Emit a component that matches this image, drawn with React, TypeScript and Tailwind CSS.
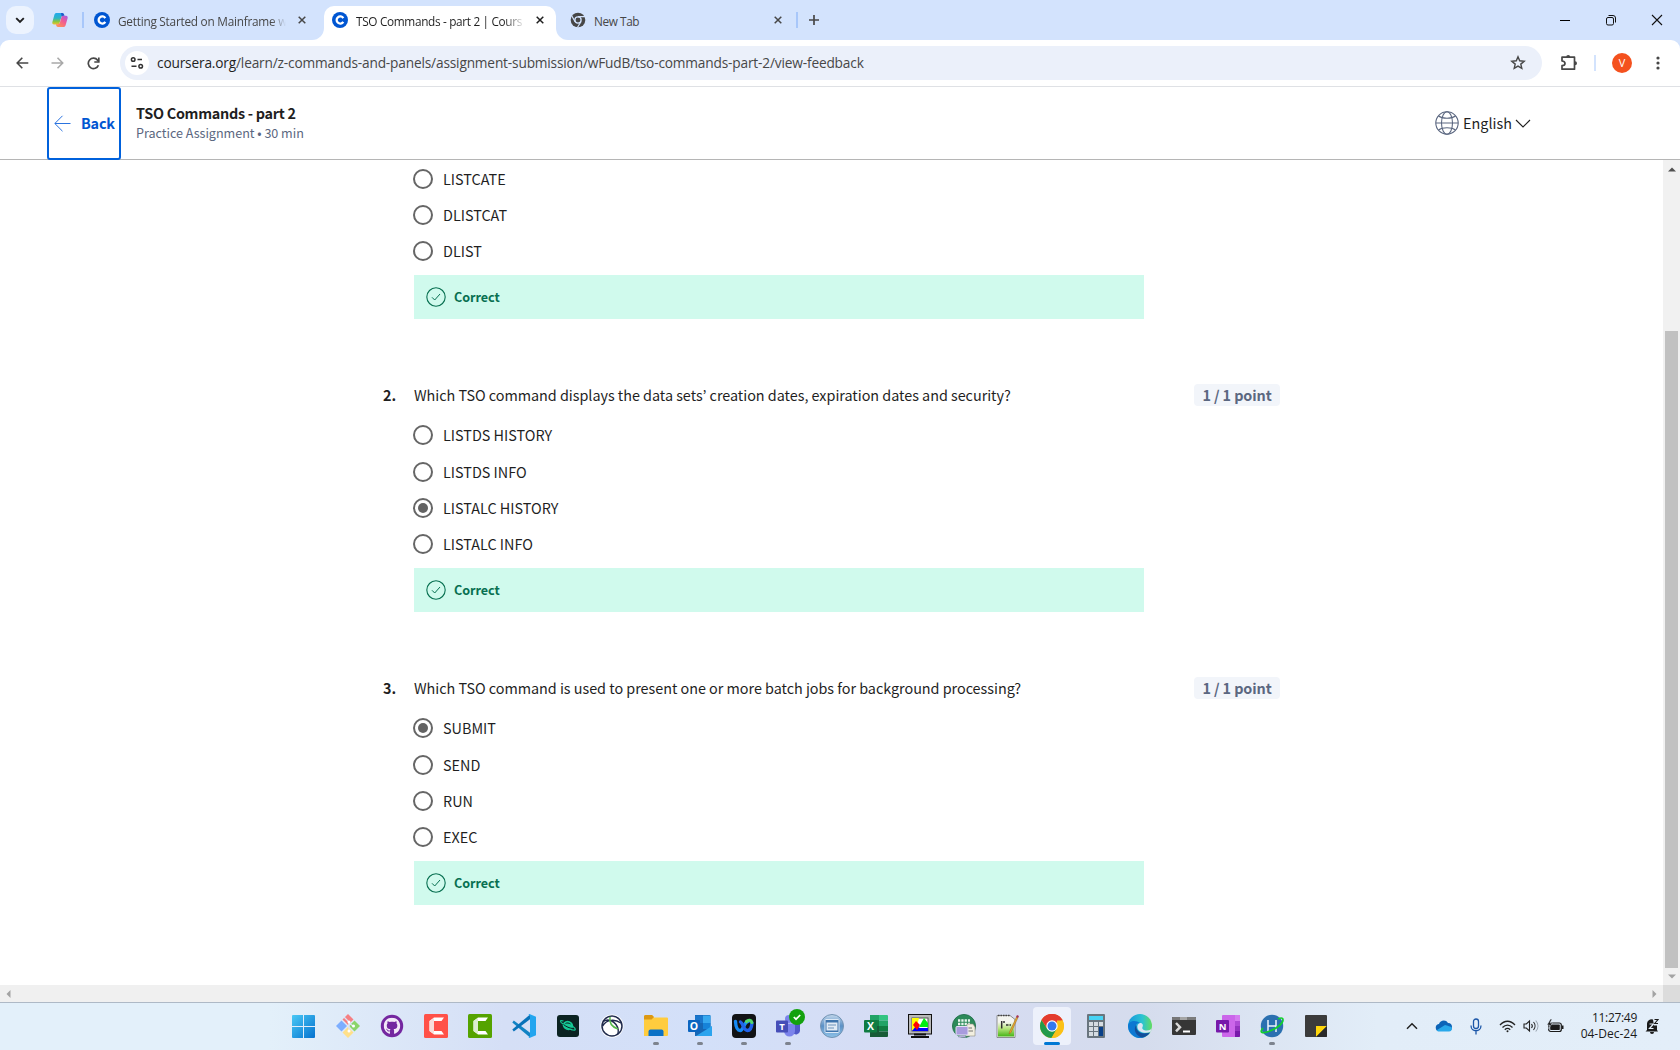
import React from 'react';
import { FaGithub } from 'react-icons/fa';

const SRC = "font-['Noto_Sans_CJK_KR',sans-serif]";
const UI = "font-['Open_Sans',sans-serif]";

function Coursera() {
  return (
    <svg width="16" height="16" viewBox="0 0 16 16" className="shrink-0">
      <circle cx="8" cy="8" r="8" fill="#0056d2" />
      <path d="M11.3 6.1A3.6 3.6 0 1 0 11.3 9.9" fill="none" stroke="#fff" strokeWidth="2.3" />
    </svg>
  );
}

function Close({ color = '#474747' }: { color?: string }) {
  return (
    <svg width="8" height="8" viewBox="0 0 8 8" className="shrink-0">
      <path d="M.7.7l6.6 6.6M7.3.7L.7 7.3" stroke={color} strokeWidth="1.5" />
    </svg>
  );
}

function TabStrip() {
  return (
    <div className={`flex h-10 items-center bg-[#d3e3fd] text-[11.8px] leading-[18px] ${UI}`}>
      <div className="ml-1.5 flex size-7 items-center justify-center rounded-[10px] bg-[#ecf3fe]">
        <svg width="10" height="7" viewBox="0 0 10 7"><path d="M1.2 1.2L5 5l3.800-3.800" fill="none" stroke="#1f1f1f" strokeWidth="1.9" /></svg>
      </div>
      <svg width="16" height="16" viewBox="0 0 16 16" className="ml-[18px] shrink-0">
        <defs>
          <linearGradient id="cpa" x1="0.3" y1="0" x2="0.3" y2="1"><stop offset="0" stopColor="#22a9ee" /><stop offset=".45" stopColor="#2fb6c4" /><stop offset=".75" stopColor="#8cc63f" /><stop offset="1" stopColor="#f3c02f" /></linearGradient>
          <linearGradient id="cpb" x1="1" y1="0" x2="0.3" y2="1"><stop offset="0" stopColor="#a25de8" /><stop offset=".5" stopColor="#ef5b94" /><stop offset="1" stopColor="#ff8d5a" /></linearGradient>
        </defs>
        <path d="M4.500 1h6c1 0 1.500 1 1.800 2l.4 1.500H9.500L7.500 11c-.4 1-1 1.500-2 1.500H2C.6 12.500 0 11.200.4 10l2-7.300C2.800 1.500 3.500 1 4.500 1z" fill="url(#cpa)" />
        <path d="M10 1c1.500 0 1.800 1 2.200 2.500l-2.500.8L9 1z" fill="#2454c8" />
        <path d="M11.500 15H6c-1 0-1.600-.8-1.900-2l-.2-.8h2.200c1 0 1.500-.8 1.800-1.600L9.500 5c.3-.8.900-1.300 1.900-1.300H14c1.400 0 2 1.300 1.600 2.500l-2 7c-.3 1.200-1.100 1.800-2.100 1.800z" fill="url(#cpb)" />
      </svg>
      <div className="ml-[14px] h-4 w-0.5 bg-[#a8c7fa]" />
      <div className="ml-2.5 flex w-[218px] items-center">
        <Coursera />
        <div className="ml-2 w-[168px] overflow-hidden whitespace-nowrap pt-px tracking-[-0.24px] text-[#474747] [mask-image:linear-gradient(to_right,#000_91%,transparent_100%)]">Getting Started on Mainframe w</div>
        <div className="ml-3"><Close /></div>
      </div>
      <div className="h-10 w-3 bg-white"><div className="size-full rounded-br-[12px] bg-[#d3e3fd]" /></div>
      <div className="mt-1.5 flex h-[34px] w-[232px] items-center rounded-t-[10px] bg-white pb-1.5 pl-2">
        <Coursera />
        <div className="ml-2 w-[168px] overflow-hidden whitespace-nowrap pt-px tracking-[-0.33px] text-[#1f1f1f] [mask-image:linear-gradient(to_right,#000_88%,transparent_101%)]">TSO Commands - part 2 | Cours</div>
        <div className="ml-3"><Close color="#1f1f1f" /></div>
      </div>
      <div className="h-10 w-3 bg-white"><div className="size-full rounded-bl-[12px] bg-[#d3e3fd]" /></div>
      <svg width="16" height="16" viewBox="0 0 16 16" className="ml-0.5 shrink-0">
        <circle cx="8" cy="8" r="7.300" fill="#474747" />
        <circle cx="8" cy="8" r="3.100" fill="#474747" stroke="#d3e3fd" strokeWidth="1.300" />
        <path d="M8 4.700h7M5.100 9.700L1.700 3.800M10.900 9.700L7.400 15.500" stroke="#d3e3fd" strokeWidth="1.200" />
      </svg>
      <div className="ml-2 w-[180px] pt-px tracking-[-0.4px] text-[#474747]">New Tab</div>
      <Close />
      <div className="ml-[14px] h-4 w-0.5 bg-[#a8c7fa]" />
      <svg width="12" height="12" viewBox="0 0 12 12" className="ml-2.5"><path d="M6 1v10M1 6h10" stroke="#474747" strokeWidth="1.700" /></svg>
      <div className="ml-auto flex items-center pr-[17px]">
        <svg width="10" height="10"><path d="M0 5.500h10" stroke="#000" /></svg>
        <svg width="12" height="12" viewBox="0 0 12 12" fill="none" stroke="#111" className="ml-[35px]"><rect x="1.500" y="3.500" width="7" height="7.500" rx="1.500" /><path d="M3.500 1.500H8A2.500 2.500 0 0 1 10.500 4v4.500" /></svg>
        <svg width="12" height="12" viewBox="0 0 12 12" className="ml-[34px]"><path d="M1 1l10 10M11 1L1 11" stroke="#111" strokeWidth="1.100" /></svg>
      </div>
    </div>
  );
}

function Toolbar() {
  return (
    <div className="h-[47px] bg-[#d3e3fd]">
      <div className="flex h-full items-center rounded-t-[9px] border-b border-[#dfe1e5] bg-white pl-4">
        <svg width="13" height="12" viewBox="0 0 13 12" fill="none" stroke="#474747" strokeWidth="1.600"><path d="M12.300 6H1.300M6.300.8L1.200 6l5.100 5.200" /></svg>
        <svg width="13" height="12" viewBox="0 0 13 12" fill="none" stroke="#a9a9a9" strokeWidth="1.600" className="ml-[22px]"><path d="M.5 6h11M6.500.8L11.700 6l-5.200 5.200" /></svg>
        <svg width="13" height="13" viewBox="0 0 13 13" fill="none" stroke="#474747" strokeWidth="1.700" className="ml-[23px]"><path d="M11.400 8.200A5.200 5.200 0 1 1 10.600 3.200L11.500 4.300" /><path d="M11.800.5v4.500H7.300" /></svg>
        <div className="ml-5 flex h-[34px] w-[1422px] items-center rounded-full bg-[#ebf0fa] pl-[5px] pr-4">
          <div className="flex size-6 items-center justify-center rounded-full bg-white">
            <svg width="14" height="14" viewBox="0 0 14 14" fill="none" stroke="#333" strokeWidth="1.500"><circle cx="3.200" cy="3.500" r="1.800" /><path d="M7.500 3.500H12M1.500 10.200h5" /><circle cx="10.700" cy="10.200" r="1.800" /></svg>
          </div>
          <div className={`ml-2 text-[13.7px] leading-[20px] tracking-[-0.17px] text-[#474747] ${UI}`}><span className="text-[#1f1f1f]">coursera.org</span>/learn/z-commands-and-panels/assignment-submission/wFudB/tso-commands-part-2/view-feedback</div>
          <svg width="16" height="16" viewBox="0 0 16 16" className="ml-auto"><path d="M8 1.800l1.700 4 4.500.4-3.400 2.900 1 4.300L8 11.100l-3.800 2.300 1-4.300L1.800 6.200l4.500-.4z" fill="none" stroke="#474747" strokeWidth="1.400" /></svg>
        </div>
        <svg width="18" height="18" viewBox="0 0 18 18" className="ml-[18px]"><path d="M2 3.200h12.500v12H2v-3.500c2.200-.2 3-1 3-2.300S4.200 7.200 2 7z" fill="none" stroke="#474747" strokeWidth="1.700" strokeLinejoin="round" /><path d="M6.200 3a2 2 0 0 1 4 0zM15 7.300a2 2 0 0 1 0 4z" fill="#474747" /></svg>
        <div className="ml-4 h-4 w-0.5 bg-[#d3e3fd]" />
        <div className={`ml-4 flex size-5 items-center justify-center rounded-full bg-[#f4511e] text-[11px] text-white ${UI}`}>V</div>
        <svg width="4" height="16" viewBox="0 0 4 16" className="ml-6" fill="#474747"><circle cx="2" cy="3" r="1.600" /><circle cx="2" cy="8" r="1.600" /><circle cx="2" cy="13" r="1.600" /></svg>
      </div>
    </div>
  );
}

function Header() {
  return (
    <header className={`flex h-[73px] border-b border-[#b5b5b5] bg-white pl-[47px] ${SRC}`}>
      <div className="flex h-[73px] w-[74px] items-center rounded-[3px] border-2 border-[#0061dc] pl-[5px]">
        <svg width="17" height="17" viewBox="0 0 17 17" fill="none" stroke="#2a73df" strokeWidth="1"><path d="M16.500 8.500H1M8.500.8L.8 8.500l7.700 7.700" /></svg>
        <span className="ml-2.5 pb-px text-[14.4px] font-bold leading-5 tracking-[-0.2px] text-[#0056d2]">Back</span>
      </div>
      <div className="ml-[15px] pt-4">
        <div className="text-[14.4px] font-bold leading-5 tracking-[-0.28px] text-[#1f1f1f]">TSO Commands - part 2</div>
        <div className="text-[12.6px] leading-5 tracking-[-0.03px] text-[#5b6780]">Practice Assignment • 30 min</div>
      </div>
      <div className="ml-auto mr-[149px] flex items-center">
        <svg width="24" height="24" viewBox="0 0 24 24" fill="none" stroke="#5b6780" strokeWidth="1.100"><circle cx="12" cy="12" r="11.200" /><ellipse cx="12" cy="12" rx="5.500" ry="11.200" /><path d="M.8 12h22.400M3.500 5c2 1.500 5 2.200 8.500 2.200s6.500-.7 8.500-2.200M3.500 19c2-1.500 5-2.200 8.500-2.200s6.500.7 8.500 2.200" /></svg>
        <span className="ml-1 text-[14.4px] leading-5 text-[#1f1f1f]">English</span>
        <svg width="16" height="9" viewBox="0 0 16 9" className="ml-[3px]" fill="none" stroke="#1f1f1f" strokeWidth="1.100"><path d="M1 1l7 7 7-7" /></svg>
      </div>
    </header>
  );
}

function Option({ label, checked }: { label: string; checked?: boolean }) {
  return (
    <div className="flex h-9 items-center">
      <div className="-ml-px flex size-5 items-center justify-center rounded-full border-2 border-[#666]">
        {checked && <div className="size-2.5 rounded-full bg-[#636363]" />}
      </div>
      <span className="ml-2.5 text-[14.4px] leading-5 text-[#1f1f1f]">{label}</span>
    </div>
  );
}

function Correct() {
  return (
    <div className="mt-1.5 flex h-11 w-[730px] items-center bg-[#d0faed] pl-3 text-[#087051]">
      <svg width="20" height="20" viewBox="0 0 20 20" fill="none" stroke="#087051"><circle cx="10" cy="10" r="9.200" strokeWidth="1.100" /><path d="M6 10.300l2.700 2.700L14 7" /></svg>
      <span className="ml-2 text-[12.6px] font-bold leading-5 tracking-[-0.05px]">Correct</span>
    </div>
  );
}

function Question({ n, text, options, selected }: { n: string; text: string; options: string[]; selected: number }) {
  return (
    <section className="pt-[66px]">
      <div className="flex h-[22px] items-center text-[14.4px] leading-[22px] text-[#1f1f1f]">
        <span className="w-[31px] pb-0.5 font-bold">{n}</span>
        <span className="w-[780px] pb-0.5 tracking-[-0.03px]">{text}</span>
        <span className="-mt-0.5 flex h-[22px] w-[86px] items-center justify-center rounded bg-[#f2f5fa] font-bold tracking-[-0.1px] text-[#5b6780]">1 / 1 point</span>
      </div>
      <div className="ml-[31px] pt-2.5">
        <div className="pb-px"><Option label={options[0]} checked={selected === 0} /></div>
        {options.slice(1).map((o, i) => <Option key={o} label={o} checked={selected === i + 1} />)}
        <Correct />
      </div>
    </section>
  );
}

function Content() {
  return (
    <div className="flex h-[825px] bg-white">
      <main className={`min-w-0 flex-1 overflow-hidden pl-[383px] pt-px ${SRC}`}>
        <div className="ml-[31px]">
          <Option label="LISTCATE" />
          <Option label="DLISTCAT" />
          <Option label="DLIST" />
          <Correct />
        </div>
        <Question n="2." text="Which TSO command displays the data sets’ creation dates, expiration dates and security?" options={['LISTDS HISTORY', 'LISTDS INFO', 'LISTALC HISTORY', 'LISTALC INFO']} selected={2} />
        <Question n="3." text="Which TSO command is used to present one or more batch jobs for background processing?" options={['SUBMIT', 'SEND', 'RUN', 'EXEC']} selected={0} />
      </main>
      <div className="flex w-[17px] flex-col items-center bg-[#f1f1f1]">
        <svg width="8" height="5" className="mt-[7px]"><path d="M0 4.500L4 .5l4 4z" fill="#505050" /></svg>
        <div className="mt-[159px] h-[637px] w-[13px] bg-[#c1c1c1]" />
        <svg width="8" height="5" className="mt-[6px]"><path d="M0 .5l4 4 4-4z" fill="#a3a3a3" /></svg>
      </div>
    </div>
  );
}

function HScroll() {
  return (
    <div className="flex h-[17px] items-center bg-[#f0f0f0] pl-1.5">
      <svg width="5" height="8"><path d="M4.500 0v8L.5 4z" fill="#a3a3a3" /></svg>
      <svg width="5" height="8" className="ml-auto mr-[6px]"><path d="M.5 0v8l4-4z" fill="#a3a3a3" /></svg>
      <div className="h-full w-[17px] bg-[#dcdcdc]" />
    </div>
  );
}

const T = (p: { x: number; y: number; s: number; f?: string; children: string; b?: boolean }) => (
  <text x={p.x} y={p.y} fontSize={p.s} fill={p.f ?? '#fff'} fontWeight={p.b ? 700 : 400} textAnchor="middle" fontFamily="Open Sans, sans-serif">{p.children}</text>
);

const icons: { el: React.ReactNode; run?: boolean; active?: boolean }[] = [
  { el: <><defs><linearGradient id="win" x1="0" y1="0" x2="1" y2="1" ><stop offset="0" stopColor="#49c8f5" /><stop offset="1" stopColor="#0572cf" /></linearGradient></defs><path d="M0 2A1 1 0 0 1 1 1H11v11H0zM12 1h10a1 1 0 0 1 1 1v10h-11zM0 13h11v11h-10a1 1 0 0 1-1-1zM12 13h11v10a1 1 0 0 1-1 1h-10z" fill="url(#win)" /></> },
  { el: <><path d="M12 0l5.500 5.500L12 11 6.500 5.500z" fill="#f57f82" /><path d="M18.500 6.500L24 12l-5.500 5.500L13 12z" fill="#8bd56b" /><path d="M5.500 6.500L11 12l-5.500 5.500L0 12z" fill="#7daeff" /><path d="M12 13l5.500 5.500L12 24l-5.500-5.500z" fill="#ffe08a" /><path d="M8 3l5 5v9M13 9l4 3" stroke="#dbe4f6" strokeWidth="1.300" fill="none" /><circle cx="13" cy="8" r="1.500" fill="#fff" /><circle cx="13" cy="17" r="1.500" fill="#fff" /><circle cx="17.500" cy="12" r="1.500" fill="#fff" /></> },
  { el: <><circle cx="12" cy="12" r="11.200" fill="#7427a0" /><FaGithub x="3.500" y="3.500" size={17} color="#f3e9f8" /></> },
  { el: <><rect width="24" height="24" rx="1.500" fill="#ff5148" /><path d="M20 3.500H10L5.500 7v10l4.500 3.500h10l-2.500-3.500H10V7h7.500z" fill="#fff" /><path d="M5.500 7L10 4v16l-4.500-3z" fill="#f8ddda" /></> },
  { el: <><rect width="24" height="24" rx="1.500" fill="#55a300" /><path d="M20 3.500H10L5.500 7v10l4.500 3.500h10l-2.500-3.500H10V7h7.500z" fill="#fff" /><path d="M5.500 7L10 4v16l-4.500-3z" fill="#deedcf" /></> },
  { el: <><path d="M1.800 6.500L18 18.800v4.700L.3 8.500z" fill="#1183c4" /><path d="M1.800 17.500L18 5.200V.5L.3 15.500z" fill="#0872b9" /><path d="M17.500 0L24 2.800v18.400L17.500 24l-1-.5 1.500-1.500V2L16.500.5z" fill="#23a5ef" /></> },
  { el: <><rect x="1" y="1" width="22" height="22" rx="3" fill="#0b2322" /><ellipse cx="12" cy="11.500" rx="5.300" ry="4.600" fill="#15c995" transform="rotate(20 12 11.500)" /><path d="M7 10C3.500 7.500 3.500 5.800 7.500 7M17 12.500c3.500 2.500 3 4.500-1 3.300-3-.8-6-2.300-9-5" fill="none" stroke="#15c995" strokeWidth="1.200" /><path d="M7.500 10.500c3 2.500 6 3.500 9 4M9.500 9.500c1.500-1 3.500-.5 5 .5" stroke="#0b2322" strokeWidth="1" fill="none" /></> },
  { el: <><circle cx="12" cy="12" r="11.500" fill="#fff" /><circle cx="12" cy="12" r="10" fill="none" stroke="#202b4d" strokeWidth="1.500" /><path d="M3 7.500C10 3 20 10 18 20M2.500 12C7 5 15 5 21 9" fill="none" stroke="#202b4d" strokeWidth="1.500" /><path d="M10 3c-1 6 2 10 8 12" fill="none" stroke="#54b848" strokeWidth="1.500" /></> },
  { run: true, el: <><path d="M0 2.500A1.500 1.500 0 0 1 1.500 1H8l2 2.500h13a1 1 0 0 1 1 1V21a1 1 0 0 1-1 1H0z" fill="#ffcc3e" /><path d="M0 2.500A1.500 1.500 0 0 1 1.500 1H8l2 2-2.500 2.500H0z" fill="#dc9813" /><path d="M4.500 22v-4.500a2 2 0 0 1 2-2h11a2 2 0 0 1 2 2V22z" fill="#0a71c6" /></> },
  { run: true, el: <><path d="M7 1h14.500a1 1 0 0 1 1 1v14L24 12v8.500a1.500 1.500 0 0 1-1.500 1.500H7z" fill="#1667b5" /><path d="M7 1.500h8V9H7z" fill="#1a76cc" /><path d="M15 1.500h7.500V9H15z" fill="#36a8ef" /><path d="M15 9h7.500v6H15z" fill="#1683d9" /><path d="M8 22l16-10v9.500a.5.500 0 0 1-.5.500z" fill="#2ba4ee" /><rect y="6" width="12" height="12" rx="1" fill="#0b65c0" /><T x={6} y={15.6} s={10.500} b>O</T></> },
  { run: true, el: <><rect width="24" height="24" rx="4" fill="#121315" /><path d="M3.500 7.500c.3 5.500 2 9 4.700 9 3.300 0 3.800-9 8-9" fill="none" stroke="#178af4" strokeWidth="3.400" strokeLinecap="round" /><path d="M8.500 8c2.500 1 3 8.500 7 8.500 3 0 4.200-4 4.500-7.500" fill="none" stroke="#2263ea" strokeWidth="3.400" strokeLinecap="round" /><path d="M14.500 7.500c2-2 4.800-1.500 5.300 1" fill="none" stroke="#54d96b" strokeWidth="3.200" strokeLinecap="round" /></> },
  { run: true, el: <><circle cx="13" cy="5" r="4" fill="#7b83eb" /><circle cx="20" cy="8" r="3" fill="#5059c9" /><path d="M17 10h7v7a4 4 0 0 1-7 2z" fill="#5059c9" /><path d="M8 9.500h11V17a5.500 5.500 0 0 1-11 0z" fill="#7b83eb" /><rect y="6.500" width="12" height="12" rx="1" fill="#464eb8" /><T x={6} y={15.700} s={9.500} b>T</T><circle cx="21" cy="3" r="8" fill="#13a10e" /><path d="M17.800 3l2.200 2.200 4.200-4.200" stroke="#fff" strokeWidth="1.700" fill="none" /></> },
  { el: <><defs><linearGradient id="pc" x1="0" y1="0" x2="0" y2="1"><stop offset="0" stopColor="#c3d8ec" /><stop offset=".5" stopColor="#5a90c6" /><stop offset="1" stopColor="#8fc3e8" /></linearGradient></defs><circle cx="12" cy="12" r="11.500" fill="url(#pc)" stroke="#7393b3" /><rect x="5" y="5.500" width="14" height="13" rx="1" fill="#3f75ad" stroke="#dbe8f5" /><rect x="6.500" y="8.500" width="11" height="8" fill="#e1ebf5" /><path d="M8 11h8M8 14h6" stroke="#6d93ba" /></> },
  { el: <><path d="M6 1h9v22H6z" fill="#185c37" /><path d="M6 1h9v5.500H6z" fill="#21a366" /><path d="M15 1h8a1 1 0 0 1 1 1v4.500h-9z" fill="#33c481" /><path d="M6 6.500h9V12H6z" fill="#107c41" /><path d="M15 6.500h9V12h-9z" fill="#21a366" /><path d="M15 12h9v5.500h-9z" fill="#107c41" /><path d="M6 17.500h18V22a1 1 0 0 1-1 1H6z" fill="#185c37" /><rect y="6" width="13" height="12.500" rx="1" fill="#107c41" /><T x={6.500} y={16} s={10.500} b>X</T></> },
  { el: <><rect x=".5" y=".5" width="23" height="19.500" fill="#b9b9b9" stroke="#111" /><rect x="4" y="4" width="16" height="13" fill="#fff" stroke="#555" /><path d="M4 4h7L9 12l-5 5z" fill="#ff0" /><path d="M16 4l4 5v4h-9z" fill="#0e1" /><path d="M4 17l4-5 4 2h8v3z" fill="#00f" /><path d="M8 7l4 4-3 5-4-5z" fill="#f00" /><path d="M6 20.500h12M3 23h18" stroke="#111" strokeWidth="2" /></> },
  { el: <><circle cx="12" cy="12" r="11.500" fill="#2c8a5a" stroke="#287551" /><path d="M6 6.500h12M6 10h12" stroke="#e9f6ee" strokeWidth="2.500" strokeDasharray="2.300 1" /><path d="M15 10h6l2 3v9h-9z" fill="#f2efe0" stroke="#8b8b7c" strokeWidth=".6" /><path d="M16 14h4M16 17h5" stroke="#555" strokeWidth=".8" /><rect x="4" y="12.500" width="12" height="8.500" rx="1" fill="#a89bdd" stroke="#e5e0f5" /><path d="M8 21.500h5l1 2H6z" fill="#b7abd8" /></> },
  { el: <><defs><linearGradient id="npp" x1="0" y1="0" x2="0" y2="1"><stop offset="0" stopColor="#f4f5f0" /><stop offset=".45" stopColor="#b6e57c" /><stop offset="1" stopColor="#45b416" /></linearGradient></defs><path d="M1 1.500h13l5 4V23.500H1z" fill="#f4f5f0" stroke="#777" strokeWidth=".8" /><path d="M2 8h16v14.500H2z" fill="url(#npp)" /><path d="M2 1.500h12" stroke="#444" strokeWidth="1.500" strokeDasharray="1.500 1" /><path d="M5.700 7v7.500M8 7v2M10 11h2.500M13.500 11h1.500" stroke="#303030" strokeWidth="1.500" /><path d="M20.500 3L13.500 18l-.5 2 2-1.500L22 3.500z" fill="#f0a72a" stroke="#8c6921" strokeWidth=".5" /><path d="M20 3l1-2 2 1-1 2z" fill="#a73557" /></> },
  { active: true, el: <><circle cx="12" cy="12" r="12" fill="#fbc116" /><path d="M12 12L1.600 6A12 12 0 0 1 22.400 6z" fill="#ea4335" /><path d="M1.600 6A12 12 0 0 0 11.500 24L17 14.500 7 14.500z" fill="#229a4a" /><path d="M12 6.500h10.700L22.400 6A12 12 0 0 0 1.600 6l5.300 8z" fill="#e33b2e" /><path d="M22.600 6.500A12 12 0 0 1 11.500 24l5.500-9V6.500z" fill="#fbc116" /><circle cx="12" cy="12" r="5.700" fill="#fff" /><circle cx="12" cy="12" r="4.500" fill="#3478f0" /></> },
  { el: <><rect x="3" width="18" height="24" rx="1" fill="#69757e" /><rect x="5" y="2" width="14" height="4" fill="#47d3f5" /><path d="M5 8h4v4H5zM10 8h4v4h-4zM15 8h4v4h-4zM5 13h4v4H5zM10 13h4v4h-4zM5 18h4v4H5zM10 18h4v4h-4z" fill="#d5dce2" /><path d="M15 13h4v9h-4z" fill="#083f88" /></> },
  { el: <><defs><linearGradient id="edg" x1="0" y1="0.3" x2="1" y2="0.3"><stop offset="0" stopColor="#1797dc" /><stop offset=".6" stopColor="#2bc3d2" /><stop offset="1" stopColor="#63dc60" /></linearGradient></defs><circle cx="12" cy="12" r="12" fill="url(#edg)" /><path d="M0 12C1 6 8 6 12 9c-4 0-5 3-3.500 6 2 4 7 5 13.500 3.500A12 12 0 0 1 0 12z" fill="#0d78d2" /><path d="M8 11c-3 5 0 11 6 12.500 3-.5 6-2 8-5-6 2-11 1-13-3-1-2 0-3-1-4.500z" fill="#134e99" /><path d="M12 9c2.500 0 3.500 2 2.500 4s1.500 3.500 4 3.500c3 0 5-1 5.500-3l-1.500 4.500c-6 2-12 0-13-4-.5-2.500.5-4.500 2.500-5z" fill="#dbe5f4" /></> },
  { el: <><rect y="3" width="24" height="18" rx="1" fill="#363636" /><path d="M0 4a1 1 0 0 1 1-1h7v3H0z" fill="#777" /><path d="M8 3h7v3H8z" fill="#a5a5a5" /><path d="M15 3h8a1 1 0 0 1 1 1v2h-9z" fill="#7c7c7c" /><path d="M4 9l4 4.200-4 4.200" stroke="#d8d8d8" strokeWidth="2.500" fill="none" /><path d="M11 17.500h7" stroke="#fff" strokeWidth="2" /></> },
  { el: <><rect x="6" y="1" width="18" height="22" rx="1" fill="#cb66ea" /><path d="M19 1h4a1 1 0 0 1 1 1v5h-5z" fill="#d47bf0" /><path d="M19 7h5v5h-5z" fill="#ae4bd5" /><path d="M19 12h5v5h-5z" fill="#9332bf" /><path d="M19 17h5v5a1 1 0 0 1-1 1h-4z" fill="#7719aa" /><rect y="6" width="13" height="12.500" rx="1" fill="#7719aa" /><T x={6.500} y={15.800} s={9.500} b>N</T></> },
  { run: true, el: <><circle cx="12" cy="12" r="11.200" fill="#2b70b0" /><path d="M8 6v12M16 6v12M8 12h8" stroke="#eef4fa" strokeWidth="1.500" /><path d="M3 14c-4 5-1 6 7 3s13-8 13-11-3-2-5-1" fill="none" stroke="#12cf2d" strokeWidth="1.700" /></> },
  { el: <><rect x="1" y="1" width="22" height="22" rx="1" fill="#3b3b3b" /><path d="M12 12h11L12 23z" fill="#ffd60a" /><path d="M23 12v10a1 1 0 0 1-1 1H12z" fill="#2a2a2a" /></> },
];

function Taskbar() {
  return (
    <div className="flex h-12 items-center border-t border-[#aeb9c6] bg-[linear-gradient(to_right,#e3f0fa_0%,#e3f0fa_16%,#d5dff6_30%,#d3e0f9_42%,#d6dcf3_55%,#d5dced_68%,#e2edf8_82%,#e3eef9_100%)] pb-px pl-[282px]">
      {icons.map((it, i) => (
        <div key={i} className="flex w-11 justify-center">
          <div className={it.active ? 'relative flex h-[38px] w-[38px] items-center justify-center rounded bg-[#edf1fb]' : 'relative flex h-[38px] w-[38px] items-center justify-center'}>
            <svg width="24" height="24" viewBox="0 0 24 24" className="overflow-visible">{it.el}</svg>
            {it.run && <span className="absolute bottom-0 left-4 h-[3px] w-1.5 rounded-full bg-[#7d838e]" />}
            {it.active && <span className="absolute bottom-0 left-[11px] h-[3px] w-4 rounded-full bg-[#0078d4]" />}
          </div>
        </div>
      ))}
      <div className="ml-auto flex items-center pr-[21px]">
        <svg width="12" height="8" viewBox="0 0 12 8"><path d="M1 6.800l5-5 5 5" fill="none" stroke="#222" strokeWidth="1.500" /></svg>
        <svg width="17" height="12" viewBox="0 0 17 12" className="ml-[17px]"><path d="M1 9C0 6 2 4 4 4c1-4 7-5 9-1 3 0 4 2 4 4 0 3-2 4-3 4H4C2 11 1 10 1 9z" fill="#0c64b8" /><path d="M2 10l8-5c2 1 6 1 7 3 0 2-1 3.500-3 3.500H4C3 11.500 2 11 2 10z" fill="#28a8ea" /></svg>
        <svg width="12" height="17" viewBox="0 0 12 17" className="ml-[18px]" fill="none" stroke="#1b56a8" strokeWidth="1.300"><rect x="3.500" y="1" width="5" height="9.500" rx="2.500" /><path d="M1 7.500c0 7 10 7 10 0M6 13v3.500" /></svg>
        <svg width="17" height="13" viewBox="0 0 17 13" className="ml-[17px]" fill="none" stroke="#222" strokeWidth="1.300"><path d="M1 5c4.500-5 10.500-5 15 0M3.500 7.500c3-3.300 7-3.300 10 0M5.800 9.700c1.700-1.600 3.700-1.600 5.400 0" /><circle cx="8.500" cy="11.200" r="1" fill="#222" stroke="none" /></svg>
        <svg width="16" height="14" viewBox="0 0 16 14" className="ml-[7px]" fill="none" stroke="#222" strokeWidth="1.100"><path d="M1 5h2.300L6.500 2v10L3.300 9H1z" /><path d="M8.500 5c1 1.200 1 2.800 0 4M10.500 3c2 2.300 2 5.700 0 8" /><path d="M12.700 1.500c3 3.300 3 7.700 0 11" stroke="#9ba5b0" /></svg>
        <svg width="17" height="14" viewBox="0 0 17 14" className="ml-[8px]"><rect x="1.700" y="4" width="12.600" height="8.500" rx="2" fill="none" stroke="#1a1a1a" strokeWidth="1.200" /><rect x="3.200" y="5.500" width="9.600" height="5.500" rx=".7" fill="#1a1a1a" /><path d="M15 6.500h1.500v3.500H15z" fill="#1a1a1a" /><path d="M3.500 0L0 6h2.500L1.500 9.500 5.500 4H3L5 0z" fill="#1a1a1a" stroke="#e2edf8" strokeWidth=".5" /></svg>
        <div className={`ml-[9px] w-[64px] text-right text-[12px] leading-4 whitespace-nowrap text-[#1a1a1a] ${UI}`}>
          <div className="tracking-[-0.3px]">11:27:49</div>
          <div>04-Dec-24</div>
        </div>
        <svg width="14" height="16" viewBox="0 0 14 16" className="ml-[8px]"><path d="M2 12V6a4.500 4.500 0 0 1 6-4.500l1 6h3V12l1 1.500H.5z" fill="#1a1a1a" /><path d="M5 14h4a2 2 0 0 1-4 0z" fill="#1a1a1a" /><path d="M4.500 6h4l-4 4.500h4" fill="none" stroke="#e2edf8" strokeWidth="1.200" /><path d="M9.500 1.500h3.500L9.700 5.500H13" fill="none" stroke="#1a1a1a" strokeWidth="1.100" /></svg>
      </div>
    </div>
  );
}

export default function App() {
  return (
    <div className="h-[1050px] w-[1680px] overflow-hidden bg-white">
      <TabStrip />
      <Toolbar />
      <Header />
      <Content />
      <HScroll />
      <Taskbar />
    </div>
  );
}
